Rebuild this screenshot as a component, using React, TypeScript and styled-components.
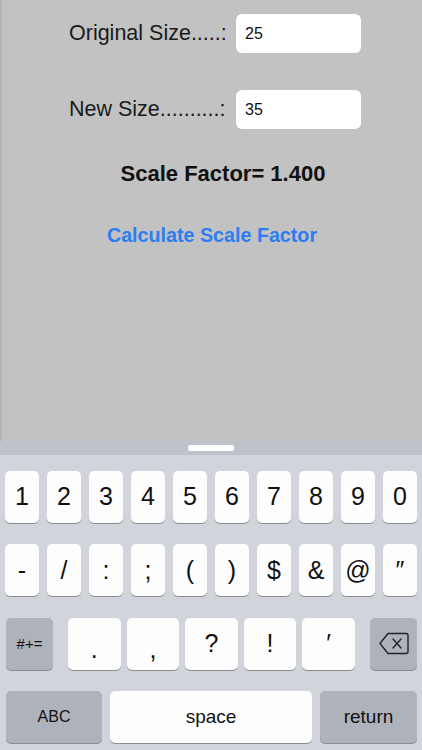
import styled, { createGlobalStyle } from "styled-components";

const GlobalStyle = createGlobalStyle`
  html, body {
    margin: 0;
    padding: 0;
    background: #c2c2c2;
  }
  body {
    font-family: "Liberation Sans", Arial, sans-serif;
  }
`;

const Screen = styled.div`
  width: 422px;
  height: 750px;
  display: flex;
  flex-direction: column;
  overflow: hidden;
`;

const Form = styled.div`
  flex: 1;
  display: flex;
  flex-direction: column;
  padding-top: 14px;
  border-left: 2px solid #b4b4b4;
`;

const FieldRow = styled.div<{ $gap?: number }>`
  display: flex;
  align-items: center;
  padding-left: 67px;
  margin-bottom: ${(p) => p.$gap ?? 0}px;
`;

const Label = styled.label`
  font-size: 21.5px;
  color: #1a1a1a;
  width: 167px;
  white-space: nowrap;
`;

const Field = styled.div`
  width: 125px;
  height: 39px;
  background: #fff;
  border-radius: 6px;
  display: flex;
  align-items: center;
  padding-left: 9px;
  box-sizing: border-box;
  font-size: 16px;
  color: #111;
`;

const Result = styled.div`
  margin-top: 32px;
  padding-left: 22px;
  text-align: center;
  font-size: 22px;
  font-weight: 700;
  color: #111;
`;

const CalcButton = styled.button`
  margin-top: 37px;
  align-self: center;
  background: none;
  border: none;
  padding: 0;
  font-family: inherit;
  font-size: 19.7px;
  font-weight: 700;
  color: #2b7ef2;
`;

const Grabber = styled.div`
  height: 14px;
  background: #bec2ca;
  display: flex;
  justify-content: center;
  align-items: center;
  &::after {
    content: "";
    width: 46px;
    height: 6px;
    border-radius: 2px;
    background: #fff;
  }
`;

const Keyboard = styled.div`
  background: #d1d4da;
  height: 295px;
  box-sizing: border-box;
  padding: 16px 0 7px;
  display: flex;
  flex-direction: column;
  gap: 21.5px;
`;

const KeyRow = styled.div<{ $pad?: string }>`
  display: flex;
  gap: 8px;
  height: 52px;
  padding: ${(p) => p.$pad ?? "0 5px"};
`;

const Group = styled.div`
  flex: 1;
  display: flex;
  gap: 6px;
  margin: 0 7px;
`;

const Key = styled.div<{ $dark?: boolean; $w?: number; $size?: number; $drop?: number }>`
  ${(p) => (p.$w ? `width: ${p.$w}px;` : "flex: 1;")}
  flex-shrink: 0;
  box-sizing: border-box;
  padding-top: ${(p) => p.$drop ?? 0}px;
  background: ${(p) => (p.$dark ? "#adb2bb" : "#fdfdfd")};
  border-radius: 5px;
  box-shadow: 0 1px 0 #8b8d91;
  display: flex;
  align-items: center;
  justify-content: center;
  font-size: ${(p) => p.$size ?? 25}px;
  color: #111;
`;

const numbers = ["1", "2", "3", "4", "5", "6", "7", "8", "9", "0"];
const symbols = ["-", "/", ":", ";", "(", ")", "$", "&", "@", "″"];
const punct = [
  { s: ".", drop: 12 },
  { s: ",", drop: 12 },
  { s: "?", drop: 0 },
  { s: "!", drop: 0 },
  { s: "′", drop: 0 },
];

const Backspace = () => (
  <svg width="30" height="23" viewBox="0 0 30 23" fill="none" stroke="#222" strokeWidth="1.4" strokeLinejoin="round">
    <path d="M9 1.5 H27 a2 2 0 0 1 2 2 V19.5 a2 2 0 0 1 -2 2 H9 L1 11.5 Z" />
    <path d="M14 7 L22 16 M22 7 L14 16" strokeLinecap="round" />
  </svg>
);

export default function App() {
  return (
    <Screen>
      <GlobalStyle />
      <Form>
        <FieldRow $gap={37}>
          <Label>Original Size.....:</Label>
          <Field>25</Field>
        </FieldRow>
        <FieldRow>
          <Label>New Size..........:</Label>
          <Field>35</Field>
        </FieldRow>
        <Result>Scale Factor= 1.400</Result>
        <CalcButton>Calculate Scale Factor</CalcButton>
      </Form>
      <Grabber />
      <Keyboard>
        <KeyRow>
          {numbers.map((n) => (
            <Key key={n}>{n}</Key>
          ))}
        </KeyRow>
        <KeyRow>
          {symbols.map((s) => (
            <Key key={s}>{s}</Key>
          ))}
        </KeyRow>
        <KeyRow $pad="0 5px 0 6px">
          <Key $dark $w={47} $size={15}>#+=</Key>
          <Group>
            {punct.map((p) => (
              <Key key={p.s} $drop={p.drop}>{p.s}</Key>
            ))}
          </Group>
          <Key $dark $w={47}>
            <Backspace />
          </Key>
        </KeyRow>
        <KeyRow $pad="0 5px 0 6px">
          <Key $dark $w={96} $size={16}>ABC</Key>
          <Key $size={19}>space</Key>
          <Key $dark $w={97} $size={19}>return</Key>
        </KeyRow>
      </Keyboard>
    </Screen>
  );
}
